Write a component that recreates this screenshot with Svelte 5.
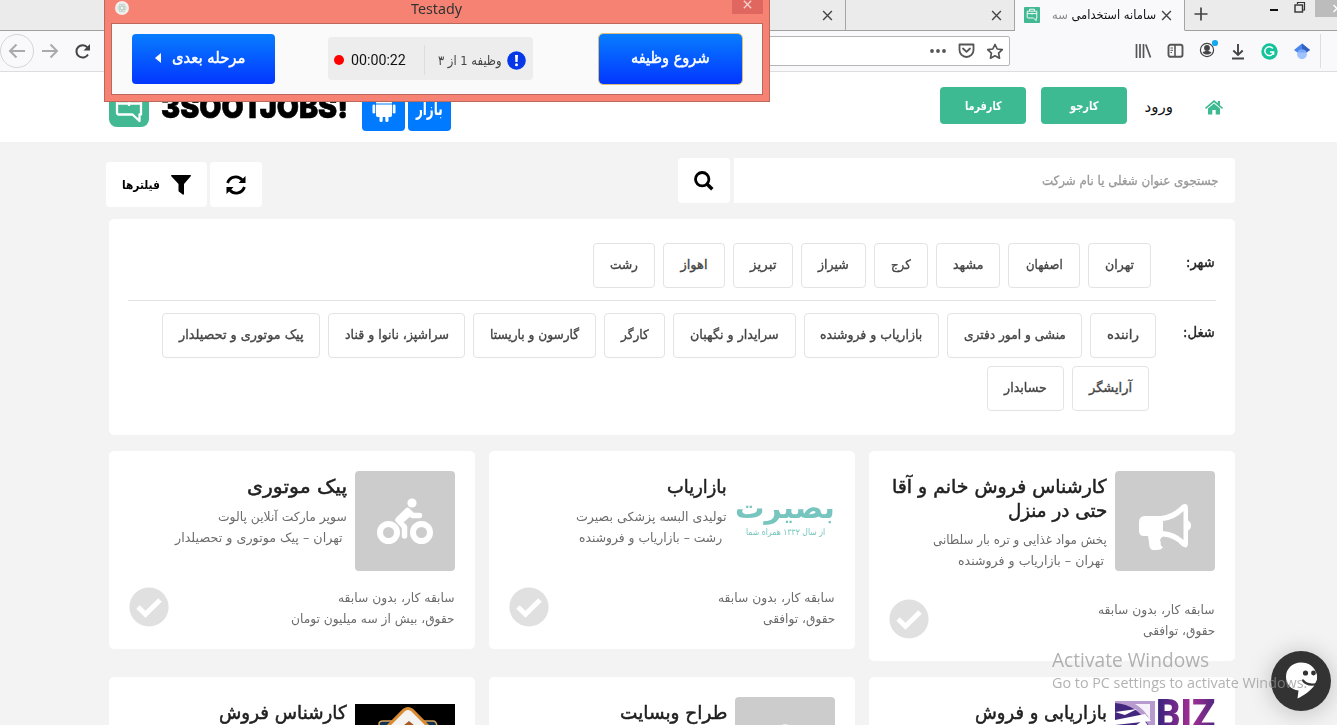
<script>
  // Scales a line of text horizontally so it occupies exactly `width` pixels.
  function fit(node, width) {
    const natural = node.offsetWidth;
    const rtl = getComputedStyle(node).direction === 'rtl';
    node.style.transformOrigin = rtl ? 'right center' : 'left center';
    node.style.transform = `scaleX(${width / natural})`;
    node.style[rtl ? 'marginLeft' : 'marginRight'] = `${width - natural}px`;
  }

  const cities = [
    ['تهران', 63, 29], ['اصفهان', 72, 37], ['مشهد', 64, 30], ['کرج', 54, 20],
    ['شیراز', 65, 31], ['تبریز', 60, 27], ['اهواز', 62, 27], ['رشت', 62, 28]
  ];
  const jobs = [
    ['راننده', 66, 32], ['منشی و امور دفتری', 135, 102], ['بازاریاب و فروشنده', 135, 102],
    ['سرایدار و نگهبان', 123, 89], ['کارگر', 61, 28], ['گارسون و باریستا', 123, 89],
    ['سراشپز، نانوا و قناد', 137, 104], ['پیک موتوری و تحصیلدار', 158, 125]
  ];
  const moreJobs = [['آرایشگر', 77, 43], ['حسابدار', 77, 43]];

  const cards = [
    {
      icon: 'horn', title: [['کارشناس فروش خانم و آقا', 215], ['حتی در منزل', 99]],
      company: ['پخش مواد غذایی و تره بار سلطانی', 174],
      place: ['تهران – بازاریاب و فروشنده', 146, 3],
      exp: ['سابقه کار، بدون سابقه', 117], pay: ['حقوق، توافقی', 72]
    },
    {
      icon: 'basirat', title: [['بازاریاب', 60]],
      company: ['تولیدی البسه پزشکی بصیرت', 151],
      place: ['رشت – بازاریاب و فروشنده', 143, 5],
      exp: ['سابقه کار، بدون سابقه', 117], pay: ['حقوق، توافقی', 72]
    },
    {
      icon: 'bike', title: [['پیک موتوری', 100]],
      company: ['سوپر مارکت آنلاین پالوت', 129],
      place: ['تهران – پیک موتوری و تحصیلدار', 168, 4],
      exp: ['سابقه کار، بدون سابقه', 117], pay: ['حقوق، بیش از سه میلیون تومان', 164]
    },
    { icon: 'biz', title: [['بازاریابی و فروش', 132]] },
    { icon: 'blank', title: [['طراح وبسایت', 107]] },
    { icon: 'gold', title: [['کارشناس فروش', 128]] }
  ];
</script>

{#snippet chip([label, w, tw])}
  <button class="chip" style:width="{w}px"><span class="f" use:fit={tw}>{label}</span></button>
{/snippet}

{#snippet cross()}
  <svg class="cross" viewBox="0 0 12 12" width="11" height="11"><path d="M1.2 1.2L10.8 10.8M10.8 1.2L1.2 10.8" fill="none" stroke="currentColor" stroke-width="1.5" /></svg>
{/snippet}

{#snippet brand(size)}
  <svg width={size} height={size} viewBox="0 0 40 40">
    <rect width="40" height="40" rx={size > 20 ? 8 : 2} fill="#42b893" />
    <g fill="none" stroke="#fff" stroke-width="2.3">
      <path d="M14 10V5.500H26V10M8 10.500H32V27.500H30.500V34L23.500 27.500H10Q8 27.500 8 25.500Z" stroke-linejoin="round" />
      <path d="M8 16.500H32M20 14V19" />
    </g>
  </svg>
{/snippet}

<div class="page">
  <div class="tabs">
    <div class="tab first">{@render cross()}</div>
    <div class="tab second">{@render cross()}</div>
    <div class="tab active">
      {@render brand(16)}
      <span class="tabname" dir="rtl"><span class="f" use:fit={104}>سامانه استخدامی <i>سه</i></span></span>
      {@render cross()}
    </div>
    <svg class="plus" width="14" height="14" viewBox="0 0 14 14"><path d="M7 0.500V13.500M0.500 7H13.500" stroke="#444" stroke-width="1.700" /></svg>
    <div class="win">
      <svg width="9" height="20" viewBox="0 0 9 20"><path d="M1 10H9" stroke="#111" stroke-width="2" /></svg>
      <svg width="12" height="14" viewBox="0 0 12 14" fill="none" stroke="#333"><path d="M3.500 4V2.500H10.500V10H8.500" stroke-width="1.200" /><rect x="1" y="5" width="7.500" height="7" stroke-width="1.400" /></svg>
      <span class="winclose"><svg width="4" height="10" viewBox="0 0 4 10"><path d="M0.500 1L4 4.500M0.500 8L4 4.500" stroke="#fff" stroke-width="1.500" /></svg></span>
    </div>
  </div>

  <div class="toolbar">
    <span class="back"><svg width="18" height="16" viewBox="0 0 18 16"><path d="M17 8H2M8.500 1.500L2 8L8.500 14.500" /></svg></span>
    <svg class="fwd" width="18" height="16" viewBox="0 0 18 16"><path d="M1 8H16M9.500 1.500L16 8L9.500 14.500" /></svg>
    <svg class="reload" width="17" height="17" viewBox="0 0 17 17"><path d="M13.500 4.500A6.200 6.200 0 1 0 14 11.500" fill="none" stroke="#444" stroke-width="2" /><path d="M16 1V7.500H9.500Z" fill="#444" /></svg>
    <div class="url">
      <svg width="18" height="6" viewBox="0 0 18 6" fill="#555"><circle cx="3" cy="3" r="1.900" /><circle cx="9" cy="3" r="1.900" /><circle cx="15" cy="3" r="1.900" /></svg>
      <svg width="17" height="16" viewBox="0 0 17 16" fill="none" stroke="#555" stroke-width="1.800" stroke-linecap="round" stroke-linejoin="round"><path d="M1.500 1.500H15.500V7A7 7 0 0 1 1.500 7Z" /><path d="M5 5.500L8.500 8.800L12 5.500" /></svg>
      <svg width="18" height="17" viewBox="0 0 18 17"><path d="M9 1.500L11.200 6L16.300 6.700L12.600 10.200L13.500 15.200L9 12.800L4.500 15.200L5.400 10.200L1.700 6.700L6.800 6Z" fill="none" stroke="#555" stroke-width="1.700" stroke-linejoin="round" /></svg>
    </div>
    <div class="tools">
      <svg width="17" height="16" viewBox="0 0 17 16"><path d="M1.500 1V15M5 1V15M8.500 1V15M10.800 1.500L15.500 14.500" fill="none" stroke="#555" stroke-width="1.700" /></svg>
      <svg width="17" height="16" viewBox="0 0 17 16" fill="none" stroke="#555"><rect x="1.500" y="1.800" width="14" height="12" rx="2" stroke-width="1.900" /><path d="M8 2V14" stroke-width="1.600" /><path d="M3.500 5H6M3.500 7.300H6M3.500 9.500H5" /></svg>
      <svg class="acct" width="20" height="20" viewBox="0 0 20 20"><circle cx="8" cy="11" r="6.600" fill="none" stroke="#444" stroke-width="1.200" /><circle cx="8" cy="9" r="2.900" fill="#444" /><path d="M3.700 13.500C5 11.500 11 11.500 12.300 13.500C10.500 16.300 5.500 16.300 3.700 13.500Z" fill="#444" /><circle cx="16" cy="4" r="3.100" fill="#16a8ee" /></svg>
      <svg width="14" height="17" viewBox="0 0 14 17"><path d="M7 1V12M2.300 7.500L7 12L11.700 7.500M1 15.500H13" fill="none" stroke="#444" stroke-width="1.900" /></svg>
      <svg class="gram" width="17" height="17" viewBox="0 0 17 17"><circle cx="8.500" cy="8.500" r="8.200" fill="#15c39a" /><path d="M11.800 5.500A4.400 4.400 0 1 0 12.600 9H9M12.600 8.800V11.800" fill="none" stroke="#fff" stroke-width="1.500" /></svg>
      <svg width="16" height="17" viewBox="0 0 16 17"><path d="M8 0.500L16 7L8 13L0 7Z" fill="#4885ed" /><path d="M8 0.500L16 7L8 12Z" fill="#3461c1" /><circle cx="8" cy="11.300" r="4.900" fill="#a0c3ff" /><path d="M3.500 9.500A5 5 0 0 1 12.500 9.500" fill="#76a7fa" /></svg>
    </div>
  </div>

  <header>
    <div class="logo">
      {@render brand(40)}
      <span class="word"><span class="f" use:fit={187}>3SOOTJOBS!</span></span>
      <span class="store">
        <svg width="26" height="30" viewBox="0 0 26 30" fill="#fff"><path d="M5 9.500A8 7.500 0 0 1 21 9.500Z" /><path d="M7 1L9 5M19 1L17 5" stroke="#fff" /><path d="M5 10.500H21V21Q21 23 19.500 23H6.500Q5 23 5 21Z" /><rect x="1.500" y="10.500" width="2.700" height="9" rx="1.300" /><rect x="21.800" y="10.500" width="2.700" height="9" rx="1.300" /><rect x="8.500" y="21" width="3.200" height="7" rx="1.600" /><rect x="14.300" y="21" width="3.200" height="7" rx="1.600" /></svg>
      </span>
      <span class="store bazaar" dir="rtl"><span class="f" use:fit={27}>بازار</span></span>
    </div>
    <nav>
      <button class="green"><span class="f" dir="rtl" use:fit={37}>کارفرما</span></button>
      <button class="green"><span class="f" dir="rtl" use:fit={29}>کارجو</span></button>
      <a class="login" dir="rtl"><span class="f" use:fit={28}>ورود</span></a>
      <svg width="18" height="15" viewBox="0 0 18 15" fill="#3dba91"><path d="M9 0L12.800 3.200V1H15V5.200L18 7.700L17 8.900L9 2.300L1 8.900L0 7.700Z" /><path d="M9 3.600L15 8.600V14.500H10.700V10H7.300V14.500H3V8.600Z" /></svg>
    </nav>
  </header>

  <main dir="rtl">
    <div class="searchrow">
      <div class="field"><span class="f" use:fit={177}>جستجوی عنوان شغلی یا نام شرکت</span></div>
      <button class="sq"><svg width="20" height="20" viewBox="0 0 20 20"><circle cx="8.200" cy="8.200" r="6.700" fill="none" stroke="#000" stroke-width="2.800" /><path d="M13 13L18.300 18.300" stroke="#000" stroke-width="3.400" /></svg></button>
      <div class="left">
        <button class="sq"><svg width="20" height="20" viewBox="0 0 20 20"><g fill="none" stroke="#000" stroke-width="2.800"><path d="M1.600 8A8.500 8.500 0 0 1 16.200 5" /><path d="M18.400 12A8.500 8.500 0 0 1 3.800 15" /></g><path d="M19.500 1V8H12.500ZM0.500 19V12H7.500Z" /></svg></button>
        <button class="filter">
          <svg width="20" height="20" viewBox="0 0 20 20"><path d="M0.500 0H19.500Q20.300 0.600 19.700 1.300L13 9V19.300L12 19.700L7.500 16.200V9L0.300 1.300Q-0.200 0.600 0.500 0Z" /></svg>
          <span class="f" use:fit={38}>فیلترها</span>
        </button>
      </div>
    </div>

    <section class="panel">
      <div class="row cities">
        <b><span class="f" use:fit={29}>شهر:</span></b>
        <div class="chips">{#each cities as c}{@render chip(c)}{/each}</div>
      </div>
      <div class="row jobs">
        <b><span class="f" use:fit={32}>شغل:</span></b>
        <div>
          <div class="chips">{#each jobs as c}{@render chip(c)}{/each}</div>
          <div class="chips more">{#each moreJobs as c}{@render chip(c)}{/each}</div>
        </div>
      </div>
    </section>

    <section class="grid">
      {#each cards as card}
        <article>
          <div class="top">
            <div class="pic {card.icon}">
              {#if card.icon === 'horn'}
                <svg width="100" height="100" viewBox="0 0 100 100" fill="#fff"><path fill-rule="evenodd" d="M24 51Q24 45 30 45H46Q58 43.500 67 34Q73 31 73 38V49.500Q76 51 76 54.500T73 59.500V72Q73 79 67 75Q60 66.500 48 65.500Q43.500 68 46 71.500Q44.500 74 48 76.500Q46 79 42 79H37Q34 77 34 71L33 65H29Q24 65 24 60ZM48 50V60Q60 61 68.500 69V40Q60 48.500 48 50Z" /></svg>
              {:else if card.icon === 'bike'}
                <svg width="100" height="100" viewBox="0 0 100 100"><g fill="none" stroke="#fff"><circle cx="33.500" cy="61.500" r="8.500" stroke-width="6" /><circle cx="66.500" cy="61.500" r="8.500" stroke-width="6" /><path d="M49.500 65V56L43 49L52.500 39.500L57.500 44.500H64.500" stroke-width="5.500" stroke-linecap="round" stroke-linejoin="round" /></g><path d="M41 47L52 37L58 43L49 51Z" fill="#fff" /><circle cx="57" cy="32" r="4.600" fill="#fff" /></svg>
              {:else if card.icon === 'basirat'}
                <div class="bname"><span class="f" use:fit={100}>بصیرت</span></div>
                <div class="bsub"><span class="f" use:fit={79}>از سال ۱۳۳۲ همراه شما</span></div>
              {:else if card.icon === 'biz'}
                <div class="rays" dir="ltr">
                  <svg width="40" height="50" viewBox="0 0 40 50"><rect width="40" height="50" fill="#b79bcf" /><path d="M0 2Q26 4 36 30V50H0Z" fill="#43277e" /><path d="M0 11L22 8L10 14ZM0 19L30 13L36 20L0 24ZM12 30L29 19L34 26L22 36Z" fill="#fff" /><path d="M20 3H35V20Q31 9 20 3Z" fill="#f5f0fa" /></svg>
                  <span class="bizname"><span class="f" use:fit={59}>BIZ</span></span>
                </div>
              {:else if card.icon === 'gold'}
                <svg width="100" height="97" viewBox="0 0 100 97"><rect width="100" height="97" fill="#000" /><path d="M24 24V20Q24 17 28 17H78Q82 17 82 24V60H24Z" fill="#103257" stroke="#d9a25b" stroke-width="1.500" /><path d="M49 6Q53 3 57 6L94 43L53 84L12 43Z" fill="#f4f3f2" stroke="#d98c32" stroke-width="3" /><path d="M48 22L54 17L60 22L57 26H50Z" fill="#a55b21" /></svg>
              {:else}
                <svg width="100" height="100" viewBox="0 0 100 100"><circle cx="50" cy="34" r="7" fill="#eee" /></svg>
              {/if}
            </div>
            <div class="info">
              <h3>{#each card.title as [t, w]}<span class="line"><span class="f" use:fit={w}>{t}</span></span>{/each}</h3>
              {#if card.company}
                <p><span class="f" use:fit={card.company[1]}>{card.company[0]}</span></p>
                <p style:padding-right="{card.place[2]}px"><span class="f" use:fit={card.place[1]}>{card.place[0]}</span></p>
              {/if}
            </div>
          </div>
          {#if card.exp}
            <div class="foot">
              <div>
                <p><span class="f" use:fit={card.exp[1]}>{card.exp[0]}</span></p>
                <p><span class="f" use:fit={card.pay[1]}>{card.pay[0]}</span></p>
              </div>
              <svg width="40" height="40" viewBox="0 0 40 40"><circle cx="20" cy="20" r="19.600" fill="#e0e0e0" /><path d="M9 20L16.500 27.300L31 13" fill="none" stroke="#fff" stroke-width="5" /></svg>
            </div>
          {/if}
        </article>
      {/each}
    </section>
  </main>

  <div class="popup">
    <div class="bar">
      <svg width="14" height="14" viewBox="0 0 14 14"><circle cx="7" cy="7" r="7" fill="#f5eeec" /><g fill="none" stroke="#a9cdbf" stroke-width="0.700"><ellipse cx="7" cy="7" rx="4.500" ry="1.800" /><ellipse cx="7" cy="7" rx="4.500" ry="1.800" transform="rotate(60 7 7)" /><ellipse cx="7" cy="7" rx="4.500" ry="1.800" transform="rotate(120 7 7)" /></g></svg>
      <span class="ptitle"><span class="f" use:fit={51}>Testady</span></span>
      <span class="pclose"><svg width="9" height="9" viewBox="0 0 9 9"><path d="M0.800 0.800L8.200 8.200M8.200 0.800L0.800 8.200" stroke="#f6d3ce" stroke-width="1.300" /></svg></span>
    </div>
    <div class="body">
      <button class="blue next"><svg width="6" height="10" viewBox="0 0 6 10"><path d="M6 0V10L0 5Z" fill="#fff" /></svg><span class="f" dir="rtl" use:fit={73}>مرحله بعدی</span></button>
      <div class="status">
        <i class="dot"></i>
        <span class="time"><span class="f" use:fit={55}>00:00:22</span></span>
        <span class="task"><span class="f" dir="rtl" use:fit={64}>وظیفه 1 از ۳</span></span>
        <svg width="19" height="19" viewBox="0 0 19 19"><circle cx="9.500" cy="9.500" r="9.300" fill="#0638e8" /><path d="M8 4H11L10.600 11H8.400Z" fill="#fff" /><circle cx="9.500" cy="13.700" r="1.500" fill="#fff" /></svg>
      </div>
      <button class="blue start"><span class="f" dir="rtl" use:fit={79}>شروع وظیفه</span></button>
    </div>
  </div>

  <div class="chat">
    <svg width="60" height="60" viewBox="0 0 60 60"><circle cx="30" cy="30" r="30" fill="#333" /><path d="M30 11.500C21 11.500 15 18 15 26C15 33 20 38.500 27.500 39.500L26.500 47.500C32 45 41 39 43.500 34L46 28.500V24C44 16 38 11.500 30 11.500Z" fill="#fff" /><circle cx="34.500" cy="22" r="2.600" fill="#333" /><circle cx="42.500" cy="22" r="2.400" fill="#333" /><path d="M32 29.500Q36 35 45.500 33" fill="none" stroke="#333" stroke-width="2.200" stroke-linecap="round" /></svg>
  </div>

  <div class="watermark">
    <div class="big"><span class="f" use:fit={157}>Activate Windows</span></div>
    <div class="small"><span class="f" use:fit={255}>Go to PC settings to activate Windows.</span></div>
  </div>
</div>

<style>
  :global(body) { background: #f3f3f3; overflow: hidden; }
  * { box-sizing: border-box; }
  .page { position: relative; width: 1337px; height: 725px; overflow: hidden; background: #f3f3f3; font-family: "DejaVu Sans", "Liberation Sans", sans-serif; color: #222; }
  svg { display: block; flex: none; }
  button { font: inherit; border: 0; padding: 0; display: flex; align-items: center; justify-content: center; flex: none; }
  .f { display: inline-block; white-space: nowrap; flex: none; }

  .tabs { display: flex; height: 31px; background: #ebebeb; padding-left: 664px; box-shadow: inset 0 -1px #a0a0a0; }
  .tab { display: flex; align-items: center; border-right: 1px solid #a5a5a5; border-bottom: 1px solid #a0a0a0; color: #444; flex: none; }
  .tab.first { width: 182px; justify-content: flex-end; padding-right: 12px; }
  .tab.second { width: 169px; justify-content: flex-end; padding-right: 12px; }
  .tab.active { width: 170px; background: #f9f9fb; border-bottom-color: #f9f9fb; padding: 0 12px 0 9px; }
  .tabname { flex: 1; padding-right: 5px; font: 12.5px/32px "DejaVu Sans", sans-serif; color: #111; }
  .tabname i { font-style: normal; color: #888; }
  .plus { margin: 7px 0 0 9px; }
  .win { display: flex; margin-left: auto; }
  .win svg { margin-right: 16px; }
  .win .winclose { width: 22px; height: 17px; background: #bcbcbc; margin-left: -7px; display: flex; justify-content: flex-end; padding-top: 4px; }
  .win .winclose svg { margin: 0; }

  .toolbar { display: flex; align-items: center; height: 41px; background: #f9f9fb; border-bottom: 1px solid #ddd; }
  .back { width: 34px; height: 34px; border: 1px solid #d5d5d5; border-radius: 50%; display: flex; align-items: center; justify-content: center; }
  .back path, .fwd path { fill: none; stroke: #aaa; stroke-width: 2; }
  .fwd { margin-left: 7px; }
  .reload { margin-left: 15px; }
  .url { margin-left: 100px; width: 819px; height: 30px; border: 1px solid #b5b5b8; border-radius: 2px; background: #fff; display: flex; align-items: center; justify-content: flex-end; gap: 11px; padding-right: 5px; }
  .tools { display: flex; align-items: center; gap: 15px; margin-left: 125px; height: 34px; padding-right: 10px; border-right: 1px solid #ddd; }
  .acct { margin: -4px -3px 0 0; }
  .gram { margin: 0 1px; }

  header { display: flex; height: 70px; background: #fff; padding: 15px 114px 0 109px; }
  .logo { display: flex; align-items: flex-start; }
  .word { width: 213px; padding-left: 12px; font: 900 32px/40px Inter, sans-serif; color: #000; margin-top: 0; -webkit-text-stroke: .6px #000; }
  .store { width: 43px; height: 43px; border-radius: 4px; background: #007bff; display: flex; align-items: center; justify-content: center; margin-top: 1px; margin-right: 3px; }
  .store svg { margin-top: -1px; }
  .bazaar { color: #fff; font-weight: bold; font-size: 19px; line-height: 22px; padding-bottom: 3px; }
  nav { display: flex; align-items: center; height: 37px; margin-left: auto; }
  .green { width: 86px; height: 37px; border-radius: 4px; background: #3dba91; color: #fff; font-weight: bold; font-size: 12px; margin-right: 15px; }
  .login { width: 28px; margin: 2px 32px 0 3px; color: #111; font-size: 15px; }
  nav svg { margin-top: 3px; }

  main { margin: 0 102px 0 109px; }
  .searchrow { display: flex; padding-top: 16px; height: 77px; gap: 4px; }
  .field { width: 501px; height: 45px; background: #fff; border-radius: 0 4px 4px 0; padding-right: 16px; line-height: 45px; font-size: 13px; color: #999; -webkit-text-stroke: .3px #999; }
  .sq { width: 52px; height: 45px; border-radius: 4px; background: #fff; }
  .sq svg { margin-right: 1px; }
  .left { display: flex; gap: 3px; margin: 4px auto 0 -3px; }
  .left .sq svg { margin-right: 0; }
  .filter { width: 101px; height: 45px; border-radius: 4px; background: #fff; gap: 12px; font-size: 12px; font-weight: bold; color: #000; }

  .panel { height: 216px; background: #fff; border-radius: 5px; padding: 24px 19px 0; }
  .row { display: flex; }
  .row b { font-size: 14px; line-height: 39px; font-weight: normal; color: #222; -webkit-text-stroke: .4px #222; }
  .cities { height: 58px; border-bottom: 1px solid #e3e3e3; }
  .cities b { width: 65px; padding-right: 1px; }
  .jobs { padding-top: 12px; }
  .jobs b { width: 60px; padding-right: 1px; }
  .chips { display: flex; gap: 8px; }
  .more { padding: 8px 7px 0 0; }
  .chip { height: 45px; border: 1px solid #e3e3e3; border-radius: 4px; background: #fff; color: #444; font-size: 13px; padding-bottom: 2px; -webkit-text-stroke: .35px #444; }

  .grid { display: grid; grid-template-columns: repeat(3, 366px); column-gap: 14px; row-gap: 16px; align-items: start; padding-top: 16px; }
  article { background: #fff; border-radius: 5px; padding: 20px; min-height: 198px; }
  .top { display: flex; gap: 8px; height: 100px; }
  .pic { width: 100px; height: 100px; border-radius: 4px; background: #ccc; overflow: hidden; flex: none; }
  .pic.basirat, .pic.biz, .pic.gold { background: #fff; border-radius: 0; }
  .pic.gold { padding-top: 7px; }
  .pic.biz { padding-top: 4px; }
  .rays { display: flex; gap: 1px; height: 50px; }
  .bizname { font: 900 40px/40px Roboto, sans-serif; margin-top: -6px; }
  .bizname .f { color: transparent; background: linear-gradient(90deg, #35247c, #a52e94 60%, #50287f); -webkit-background-clip: text; background-clip: text; }
  .bname { margin-top: 18px; height: 44px; font-weight: bold; font-size: 30px; line-height: 38px; color: #76c5be; }
  .bsub { font-size: 9px; line-height: 12px; margin-top: -7px; padding-right: 10px; color: #76c5be; }
  .info { flex: 1; }
  h3 { margin: 3px 0 8px; font-size: 19px; line-height: 24px; font-weight: normal; color: #212121; -webkit-text-stroke: .5px #212121; }
  .line { display: block; height: 24px; }
  p { margin: 0; height: 21px; line-height: 21px; font-size: 12.5px; color: #6c6c6c; }
  .foot { display: flex; justify-content: space-between; padding-top: 16px; }
  article:first-child { min-height: 210px; }
  article:first-child .top { height: 112px; }
  article:first-child h3 { margin-bottom: 7px; }
  .foot svg { margin-left: -.5px; }

  .popup { position: absolute; left: 104px; top: -1px; width: 666px; height: 103px; background: #f58273; border: 1px solid #bd665c; }
  .bar { display: flex; height: 23px; padding-left: 10px; align-items: flex-start; }
  .bar > svg { margin-top: 1px; }
  .ptitle { margin: -1px 0 0 282px; font: 14px/20px "Noto Sans", sans-serif; color: #333; }
  .pclose { width: 31px; height: 14px; background: #e0675f; margin-left: 270px; display: flex; justify-content: center; }
  .body { margin: 0 6px; height: 72px; border: 1px solid #bd665c; background: #fafafa; display: flex; align-items: flex-start; padding: 10px 19px 0 20px; }
  .blue { width: 143px; height: 50px; border-radius: 4px; background: linear-gradient(#077dff, #0336ff); color: #fff; font-size: 16px; -webkit-text-stroke: .5px #fff; gap: 11px; padding-bottom: 3px; }
  .next { padding-right: 7px; }
  .start { outline: 1px solid #d8bd7e; outline-offset: 0; margin-left: 66px; }
  .status { width: 205px; height: 43px; margin: 3px 0 0 53px; border-radius: 4px; background: #ededed; display: flex; align-items: center; padding: 3px 7px 0 6px; }
  .dot { width: 10px; height: 10px; border-radius: 50%; background: #f00; margin-right: 7px; }
  .time { font: 15px/30px Roboto, sans-serif; color: #111; width: 74px; border-right: 1px solid #ddd; }
  .task { margin: 0 5px 0 12px; width: 65px; font-size: 13px; color: #444; direction: rtl; }

  .chat { position: absolute; left: 1271px; top: 651px; border-radius: 50%; box-shadow: 0 2px 24px rgba(0, 0, 0, .22); }
  .watermark { position: absolute; left: 1052px; top: 648px; font-family: "Open Sans", sans-serif; color: rgba(145, 145, 145, .7); }
  .big { font-size: 20px; line-height: 24px; }
  .small { font-size: 14px; line-height: 22px; }
</style>
